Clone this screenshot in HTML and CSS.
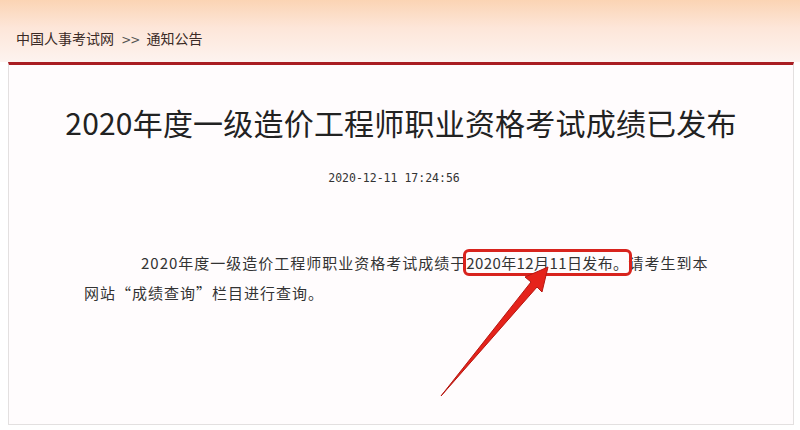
FILE: index.html
```html
<!DOCTYPE html>
<html lang="zh-CN">
<head>
    <meta charset="UTF-8">
    <meta name="viewport" content="width=device-width, initial-scale=1.0">
    <title>通知公告</title>
    <link rel="stylesheet" href="styles.css">
</head>
<body>
    <div class="top">
        <div class="crumb">
            <a href="#">中国人事考试网</a>
            <span class="sep">&gt;&gt;</span>
            <a href="#">通知公告</a>
        </div>
    </div>

    <div class="article">
        <h1 class="title">2020年度一级造价工程师职业资格考试成绩已发布</h1>
        <div class="date">2020-12-11 17:24:56</div>
        <p class="content">2020年度一级造价工程师职业资格考试成绩于<span class="mark">2020年12月11日发布。</span>请考生到本网站<span class="quote">“成绩查询”</span>栏目进行查询。</p>
    </div>

    <!-- 标注箭头 -->
    <svg class="arrow" width="800" height="430" viewBox="0 0 800 430">
        <polygon points="441,396 531,282 525,277 548,267 542,292 537,287" fill="#e5231b" stroke="#b51812" stroke-width="1" stroke-linejoin="round"/>
    </svg>
</body>
</html>
```

FILE: styles.css
```css
body {
    margin: 0;
    background: #fff;
    font-family: "Noto Sans CJK SC", sans-serif;
    color: #333;
    position: relative;
    height: 430px;
    overflow: hidden;
}

.top {
    height: 62px;
    background: linear-gradient(to bottom, #fbd4b4 0%, #fde6d9 45%, #fdf3ef 100%);
}

.crumb {
    padding: 28px 0 0 16px;
    font-size: 14px;
    line-height: 20px;
}

.crumb a {
    color: #3a2a26;
    text-decoration: none;
}

.crumb .sep {
    color: #555;
    margin: 0 4px;
    font-family: "DejaVu Sans", sans-serif;
    font-size: 12px;
    letter-spacing: -1px;
}

.article {
    margin: 0 6px 0 8px;
    height: 359px;
    border: 1px solid #e3e0e0;
    border-top: 3px solid #a91d22;
    background: #fffcfd;
}

.title {
    margin: 37px 0 0;
    font-size: 30px;
    line-height: 40px;
    font-weight: normal;
    letter-spacing: 0.2px;
    text-align: center;
    color: #222;
}

.date {
    margin-top: 26px;
    padding-right: 14px;
    font-family: "DejaVu Sans Mono", monospace;
    font-size: 11.5px;
    line-height: 20px;
    text-align: center;
    color: #333;
}

.content {
    margin: 60px 0 0 75px;
    width: 636px;
    font-family: "Liberation Sans Narrow", "Noto Sans CJK SC", sans-serif;
    font-size: 15px;
    line-height: 30px;
    letter-spacing: 1px;
    text-indent: 57px;
    color: #333;
}

.mark {
    letter-spacing: 0.4px;
    outline: 3px solid #d8231d;
    outline-offset: 0;
    border-radius: 3px;
}

.quote {
    font-family: "Noto Sans CJK SC", sans-serif;
    font-feature-settings: "fwid";
}

.arrow {
    position: absolute;
    left: 0;
    top: 0;
}
```
